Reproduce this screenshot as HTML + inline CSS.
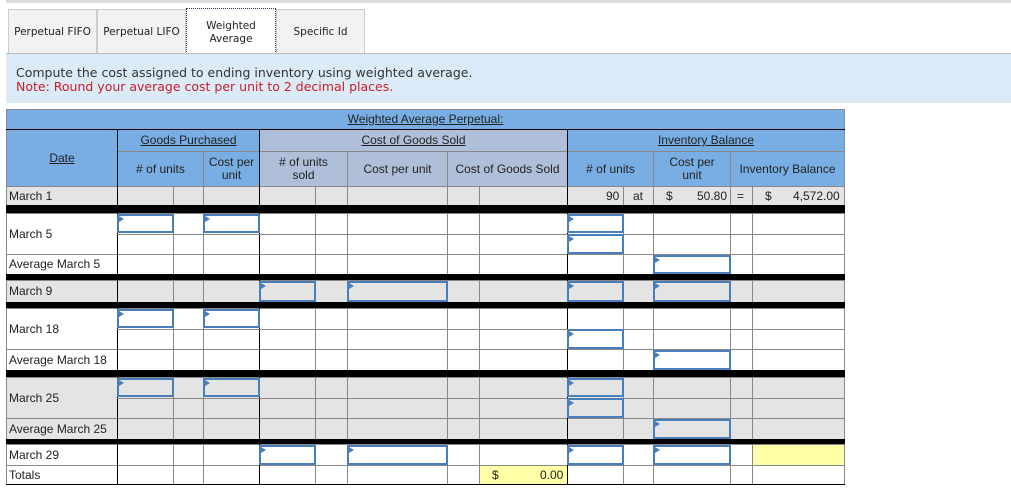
<!DOCTYPE html>
<html><head><meta charset="utf-8"><style>
body{margin:0;width:1011px;height:494px;position:relative;background:#fff;font-family:"Liberation Sans",Arial,Helvetica,sans-serif;overflow:hidden}
.a{position:absolute;box-sizing:border-box}
.tab{position:absolute;top:9px;height:45px;background:#f2f2f2;border:1px solid #ccc;border-bottom:none;font-family:"DejaVu Sans",sans-serif;font-size:10.5px;color:#222;display:flex;align-items:center;justify-content:center;text-align:center;line-height:13px}
.t{position:absolute;font-family:"Liberation Sans",Arial,sans-serif;font-size:12px;color:#222;white-space:nowrap}
.h{position:absolute;font-family:"Liberation Sans",Arial,sans-serif;font-size:12px;color:#222;text-align:center;display:flex;align-items:center;justify-content:center;line-height:13px;box-sizing:border-box}
.u{text-decoration:underline}
.inp{position:absolute;box-sizing:border-box;border:2px solid #4a7ebb;background:transparent}
.inp:before{content:"";position:absolute;left:0;top:0;border-left:5px solid #4a7ebb;border-top:3px solid transparent;border-bottom:3px solid transparent}
</style></head><body>
<div class="a" style="left:6px;top:0;width:1005px;height:3px;background:#ddd"></div>
<div class="tab" style="left:8px;width:87px">Perpetual FIFO</div>
<div class="tab" style="left:97px;width:87px">Perpetual LIFO</div>
<div class="tab" style="left:186px;width:88px;background:#fff;border:1px dotted #335;border-bottom:none;top:8px;height:47px">Weighted<br>Average</div>
<div class="tab" style="left:276px;width:87px">Specific Id</div>
<div class="a" style="left:6px;top:53px;width:1005px;height:1px;background:#bbb"></div>
<div class="a" style="left:6px;top:54px;width:1005px;height:49px;background:#daeaf7"></div>
<div class="t" style="left:16px;top:65px;font-family:'DejaVu Sans',sans-serif;font-size:12.5px;color:#333">Compute the cost assigned to ending inventory using weighted average.</div>
<div class="t" style="left:16px;top:79px;font-family:'DejaVu Sans',sans-serif;font-size:12.5px;color:#c8202a">Note: Round your average cost per unit to 2 decimal places.</div>
<div id="g"></div>
<script>
var g=document.getElementById('g'),H='';
function r(x,y,w,h,c){H+='<div class="a" style="left:'+x+'px;top:'+y+'px;width:'+w+'px;height:'+h+'px;background:'+c+'"></div>';}
function ip(x1,x2,y1,y2){H+='<div class="inp" style="left:'+x1+'px;top:'+(y1+1)+'px;width:'+(x2-x1+1)+'px;height:'+(y2-y1-1)+'px"></div>';}
function tx(s,x,y,st){H+='<div class="t" style="left:'+x+'px;top:'+y+'px;'+(st||'')+'">'+s+'</div>';}
function hd(s,x1,x2,y1,y2,cls){H+='<div class="h '+(cls||'')+'" style="left:'+x1+'px;width:'+(x2-x1)+'px;top:'+y1+'px;height:'+(y2-y1)+'px">'+s+'</div>';}
var B='#78aee3',C='#b0bfd9',G='#e4e4e4',L='#888';
// header
r(6,109,839,77,'#888');
r(7,110,837,19,B);
r(7,130,110,56,B);
r(118,130,141,56,B);
r(260,130,307,56,C);
r(568,130,276,56,B);
r(118,151,449,1,'#888');r(568,151,276,1,'#888');
r(6,129,839,1,'#000');r(117,129,1,57,'#000');r(259,129,1,57,'#000');r(567,129,1,57,'#000');
[203,347,447,653,730].forEach(function(c){r(c,152,1,34,'#888');});
hd('Weighted Average Perpetual:',7,844,110,129,'u');
hd('Date',7,117,130,186,'u');
hd('Goods Purchased',118,259,130,151,'u');hd('Cost of Goods Sold',260,567,130,151,'u');hd('Inventory Balance',568,844,130,151,'u');
hd('# of units',118,203,152,186);hd('Cost per<br>unit',204,259,152,186);
hd('# of units<br>sold',260,347,152,186);hd('Cost per unit',348,447,152,186);hd('Cost of Goods Sold',448,567,152,186);
hd('# of units',568,653,152,186);hd('Cost per<br>unit',654,730,152,186);hd('Inventory Balance',731,844,152,186);
// body rows
var cols=[117,173,203,259,315,347,447,479,567,623,653,730,752,844];
var rows=[[186,205,G,'March 1',0],[213,254,'#fff','March 5',1],[254,274,'#fff','Average March 5',0],[280,302,G,'March 9',0],[308,349,'#fff','March 18',1],[349,370,'#fff','Average March 18',0],[377,418,G,'March 25',1],[418,439,G,'Average March 25',0],[444,465,'#fff','March 29',0],[465,484,'#fff','Totals',0]];
rows.forEach(function(R){
 r(6,R[0],839,R[1]-R[0]+1,L);r(7,R[0]+1,837,R[1]-R[0]-1,R[2]);
 cols.forEach(function(c){r(c,R[0],1,R[1]-R[0],(c==117||c==259||c==567)?'#000':L);});
 if(R[4]){var m=Math.round((R[0]+R[1])/2);r(117,m,727,1,L);}
 tx(R[3],9,(R[0]+R[1])/2-7);
});
[[205,213],[274,280],[302,308],[370,377],[439,444]].forEach(function(b){r(6,b[0],839,b[1]-b[0],'#000');});
r(6,484,839,1,'#000');
tx('90',606,189);tx('at',633,189);tx('$',666,189);tx('50.80',697,189);tx('=',737,189);tx('$',765,189);tx('4,572.00',793,189);
ip(117,173,213,233);ip(203,259,213,233);ip(567,623,213,233);ip(567,623,233,254);ip(653,730,254,274);
ip(259,315,280,302);ip(347,447,280,302);ip(567,623,280,302);ip(653,730,280,302);
ip(117,173,308,328);ip(203,259,308,328);ip(567,623,328,349);ip(653,730,349,370);
ip(117,173,377,397);ip(203,259,377,397);ip(567,623,377,397);ip(567,623,397,418);ip(653,730,418,439);
ip(259,315,444,465);ip(347,447,444,465);ip(567,623,444,465);ip(653,730,444,465);
r(753,445,91,20,'#ffffa8');
r(480,466,87,18,'#ffffa8');tx('$',492,468);tx('0.00',540,468);
g.innerHTML=H;
</script>
</body></html>
